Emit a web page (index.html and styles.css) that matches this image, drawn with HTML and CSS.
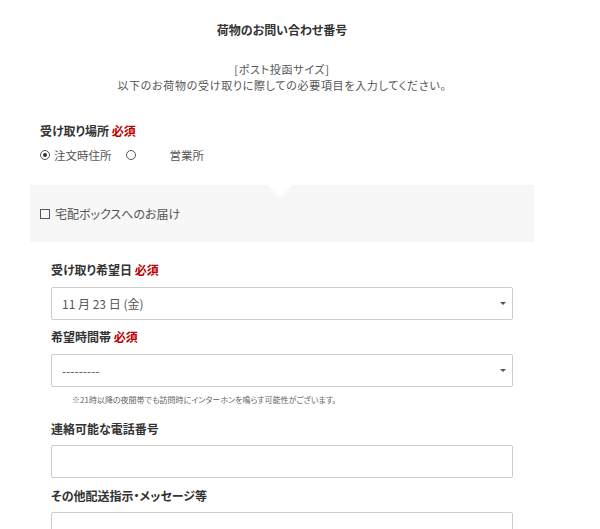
FILE: index.html
```html
<!DOCTYPE html>
<html lang="ja">
<head>
    <meta charset="UTF-8">
    <meta name="viewport" content="width=device-width, initial-scale=1.0">
    <title>荷物のお問い合わせ番号</title>
    <link rel="stylesheet" href="styles.css">
</head>
<body>
    <div class="page">
        <h1 class="title">荷物のお問い合わせ番号</h1>

        <div class="intro">
            <p>[ポスト投函サイズ]</p>
            <p>以下のお荷物の受け取りに際しての必要項目を入力してください。</p>
        </div>

        <div class="place">
            <div class="label">受け取り場所 <span class="req">必須</span></div>
            <div class="radios">
                <label class="radio checked"><span class="dot"></span>注文時住所</label>
                <label class="radio"><span class="dot"></span><span class="radio-gap"></span>営業所</label>
            </div>
        </div>

        <div class="box">
            <label class="check"><span class="square"></span>宅配ボックスへのお届け</label>
        </div>

        <form class="form">
            <div class="label">受け取り希望日 <span class="req">必須</span></div>
            <div class="select">11 月 23 日 (金)</div>

            <div class="label">希望時間帯 <span class="req">必須</span></div>
            <div class="select">---------</div>
            <p class="note">※21時以降の夜間帯でも訪問時にインターホンを鳴らす可能性がございます。</p>

            <div class="label">連絡可能な電話番号</div>
            <input type="text" class="input">

            <div class="label">その他配送指示・メッセージ等</div>
            <input type="text" class="input">
        </form>
    </div>
</body>
</html>
```

FILE: styles.css
```css
body {
    margin: 0;
    padding: 0;
    background-color: #fff;
    color: #555;
    font-family: "Noto Sans CJK JP", "Noto Sans", sans-serif;
    font-feature-settings: "palt";
    overflow: hidden;
}

.page {
    width: 504px;
    margin-left: 30px;
}

.title {
    margin: 22px 0 0;
    text-align: center;
    font-size: 12px;
    line-height: 16px;
    color: #333;
}

.intro {
    margin-top: 23px;
    text-align: center;
}

.intro p {
    margin: 0;
    font-size: 11px;
    line-height: 16px;
    letter-spacing: 0.7px;
}

.place {
    padding: 0 10px;
    margin-top: 30px;
}

.label {
    font-size: 12px;
    line-height: 16px;
    font-weight: bold;
    color: #333;
}

.req {
    color: #b00;
}

.radios {
    display: flex;
    align-items: center;
    margin-top: 8px;
    font-size: 11.5px;
    line-height: 16px;
}

.radio {
    display: flex;
    align-items: center;
    margin-right: 14px;
}

.dot {
    width: 8px;
    height: 8px;
    border: 1px solid #555;
    border-radius: 50%;
    margin: 0 4px 0 0;
    position: relative;
}

.radio.checked .dot::after {
    content: "";
    position: absolute;
    left: 2px;
    top: 2px;
    width: 4px;
    height: 4px;
    border-radius: 50%;
    background-color: #333;
}

.radio-gap {
    width: 30px;
}

.box {
    position: relative;
    margin-top: 22px;
    height: 57px;
    padding: 0 10px;
    background-color: #f7f7f7;
    display: flex;
    align-items: center;
}

.box::before {
    content: "";
    position: absolute;
    top: 0;
    left: 237px;
    border-left: 13px solid transparent;
    border-right: 13px solid transparent;
    border-top: 12px solid #fff;
}

.check {
    display: flex;
    align-items: center;
    font-size: 12px;
    line-height: 16px;
}

.square {
    width: 8px;
    height: 8px;
    border: 1px solid #555;
    margin-right: 5px;
}

.form {
    margin: 20px 0 0 21px;
    width: 462px;
}

.form .label {
    margin-top: 9px;
}

.form .label:first-child {
    margin-top: 0;
}

.select {
    position: relative;
    box-sizing: border-box;
    height: 33px;
    margin-top: 9px;
    padding: 0 10px;
    border: 1px solid #ccc;
    border-radius: 2px;
    font-size: 12px;
    line-height: 31px;
    color: #555;
}

.select::after {
    content: "";
    position: absolute;
    right: 6px;
    top: 14px;
    border-left: 3px solid transparent;
    border-right: 3px solid transparent;
    border-top: 3px solid #555;
}

.note {
    margin: 7px 0 0 21px;
    font-size: 8px;
    line-height: 12px;
    color: #666;
}

.form .note + .label {
    margin-top: 15px;
}

.input {
    display: block;
    box-sizing: border-box;
    width: 100%;
    height: 33px;
    margin: 8px 0 0;
    padding: 0 10px;
    border: 1px solid #ccc;
    border-radius: 2px;
    font-size: 12px;
    outline: none;
}

.input + .label {
    margin-top: 10px;
}
```
